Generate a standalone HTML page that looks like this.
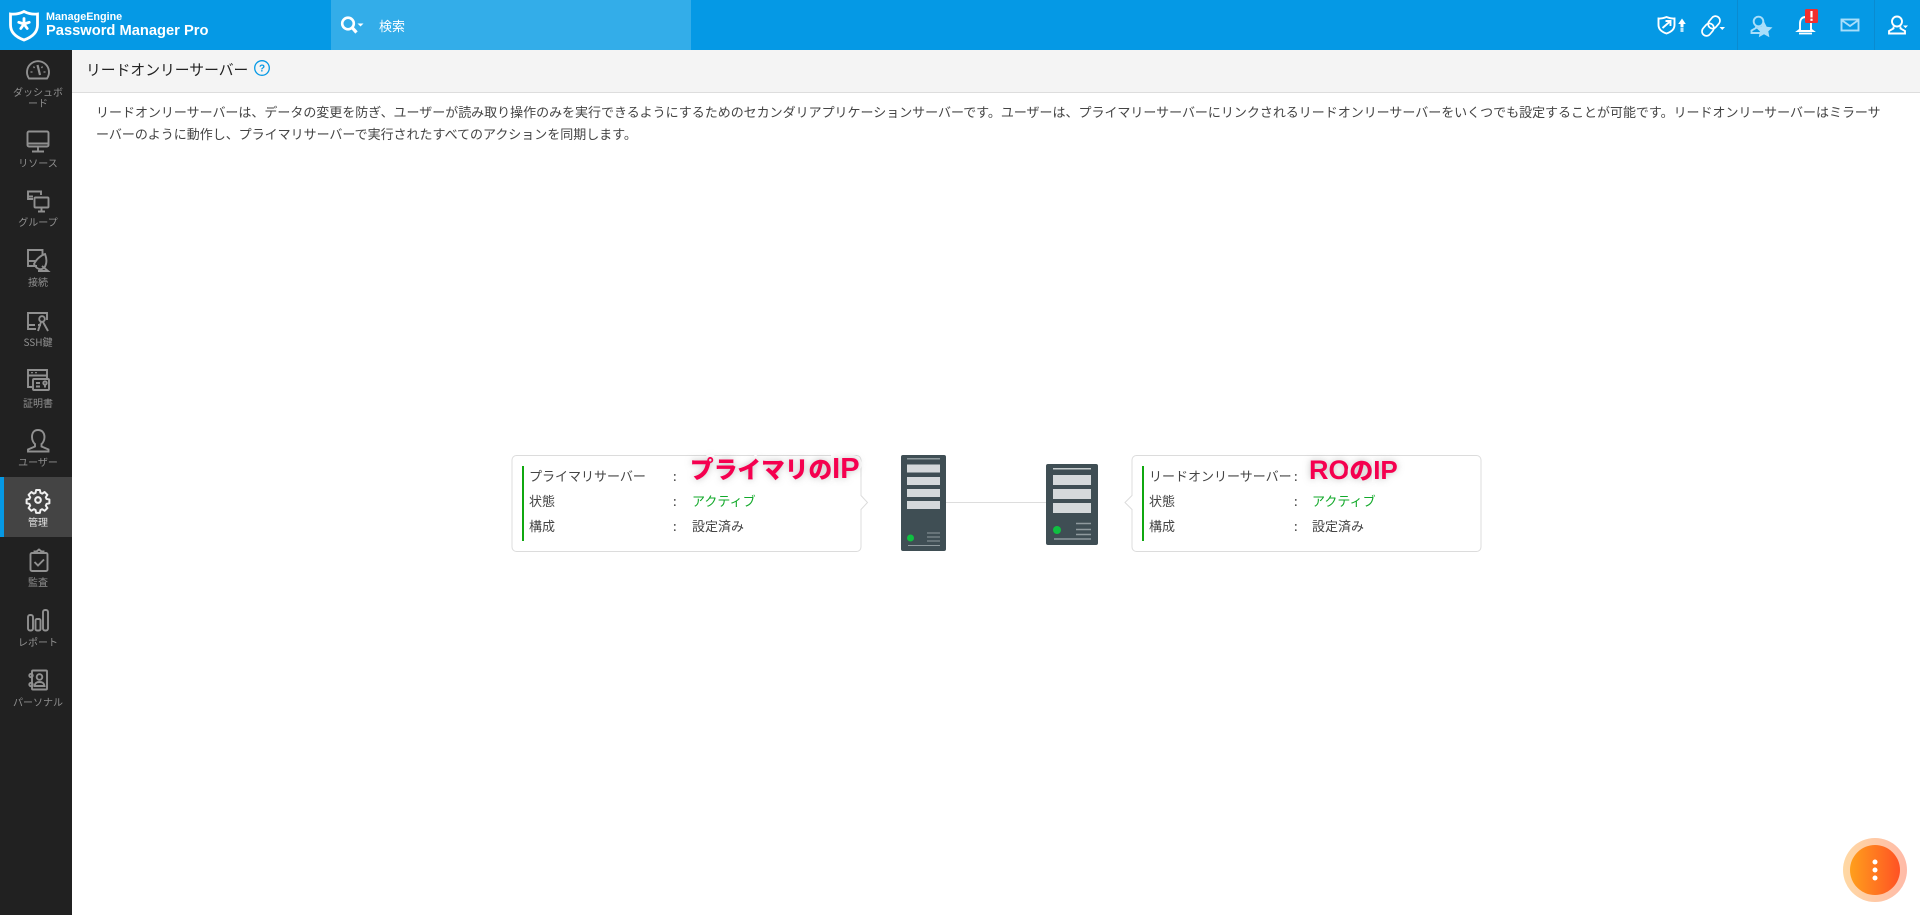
<!DOCTYPE html>
<html lang="ja">
<head>
<meta charset="utf-8">
<title>リードオンリーサーバー</title>
<style>
html,body{margin:0;padding:0;width:1920px;height:915px;overflow:hidden;background:#fff;font-family:"Liberation Sans","Noto Sans CJK JP",sans-serif;color:#333}
.a{position:absolute;white-space:nowrap}
.t{font-size:13px;line-height:20px;color:#444;font-family:"Noto Sans CJK JP","Liberation Sans",sans-serif}
.lab{position:absolute;left:4px;width:68px;text-align:center;font-size:10px;line-height:10px;color:#8f8f8f;font-family:"Noto Sans CJK JP","Liberation Sans",sans-serif}
.note{position:absolute;white-space:nowrap;font-size:23.700px;line-height:28px;font-weight:900;color:#f5004f;font-family:"Liberation Sans","Noto Sans CJK JP",sans-serif;-webkit-text-stroke:6px #fff;paint-order:stroke fill;text-shadow:0 0 7px rgba(120,120,120,.5)}
.note span{font-size:26px;font-weight:700}
svg{position:absolute;overflow:visible}
</style>
</head>
<body>
<!-- header -->
<div class="a" style="left:0;top:0;width:1920px;height:50px;background:#0599e5"></div>
<div class="a" style="left:331px;top:0;width:360px;height:50px;background:#33ade9"></div>
<div class="a" style="left:1737px;top:0;width:1px;height:50px;background:#0a8bd0"></div>
<div class="a" style="left:1874px;top:0;width:1px;height:50px;background:#0a8bd0"></div>
<svg style="left:9px;top:9px" width="32" height="33" viewBox="0 0 32 33"><path d="M15 2.500 C11 4.500 6 5.500 1.500 5 V16 C1.500 24 8 28.500 15 31 C22 28.500 28.500 24 28.500 16 V5 C24 5.500 19 4.500 15 2.500Z" fill="none" stroke="#fff" stroke-width="2.800"/><path d="M15 15 V9.500 M15 15 L20.200 13.300 M15 15 L18.200 19.500 M15 15 L11.800 19.500 M15 15 L9.800 13.300" stroke="#fff" stroke-width="2.800" fill="none" stroke-linecap="round"/></svg>
<div class="a" style="left:46px;top:10px;font-size:10.800px;line-height:14px;font-weight:700;color:#fff">ManageEngine</div>
<div class="a" style="left:46px;top:21px;font-size:14.700px;line-height:20px;font-weight:700;color:#fff">Password Manager Pro</div>
<svg style="left:338px;top:12px" width="30" height="26" viewBox="0 0 30 26" fill="none" stroke="#fff" stroke-width="2.600"><circle cx="10" cy="11.500" r="5.800"/><path d="M14.200 15.700 L18.500 20.500" stroke-width="3.200"/><path d="M19.500 11.500 h6 l-3 3z" fill="#fff" stroke="none"/></svg>
<div class="a" style="left:379px;top:16px;font-size:13px;line-height:20px;color:#fff;font-family:'Noto Sans CJK JP',sans-serif">検索</div>

<!-- header right icons -->
<svg style="left:1620px;top:0" width="300" height="50" viewBox="0 0 300 50" fill="none" stroke="#fff" stroke-width="1.900">
<path d="M46.500 17 C43 18.300 41 18.700 38.500 18.500 V25 C38.500 29.500 42 32 46.500 33.500 C51 32 54.500 29.500 54.500 25 V18.500 C52 18.700 50 18.300 46.500 17Z"/>
<path d="M42.500 28 L50 21.500 M45.500 21 H50.500 V26"/>
<path d="M58.200 24 L62 18.500 L65.800 24 H63.500 V27 H60.500 V24Z" fill="#fff" stroke="none"/><rect x="60.500" y="27.500" width="3" height="4.500" fill="#bfe6fa" stroke="none"/>
<g transform="rotate(-50 91 26)" stroke-width="1.700"><rect x="79.500" y="21.500" width="13.500" height="9" rx="4.500"/><rect x="89" y="21.500" width="13.500" height="9" rx="4.500"/></g>
<path d="M99.500 27 h5.500 l-2.750 3z" fill="#fff" stroke="none"/>
<g stroke="#a9defa"><circle cx="138.500" cy="21.500" r="4.800"/><path d="M136 26.500 V28 L131.500 30.500 V33 H141"/></g>
<path d="M144 21.500 l2.700 5.200 5.800.7 -4.200 4 1.100 5.800 -5.400-2.900 -5.200 2.900 1.100-5.800 -4.200-4 5.700-.7z" fill="#a9defa" stroke="none"/>
<path d="M180 29.500 V23.500 C180 19.500 182 17 185.500 17 C189 17 191 19.500 191 23.500 V29.500 L193 31 H178Z"/>
<path d="M179 33.500 h13" stroke-width="1.800"/>
<rect x="185" y="9" width="13" height="14" rx="1.500" fill="#f02e2e" stroke="none"/>
<rect x="190.400" y="11" width="2.200" height="6.500" fill="#fff" stroke="none"/><rect x="190.400" y="18.700" width="2.200" height="2.200" fill="#fff" stroke="none"/>
<g stroke="#a9defa"><rect x="221.500" y="19.500" width="17" height="11"/><path d="M221.500 20 L230 26 L238.500 20"/></g>
<circle cx="277" cy="21.500" r="5"/><path d="M273.500 26.500 V28.500 L269 31 V33.500 H285 V31 L280.500 28.500 V26.500"/>
<path d="M283 25.500 h5 l-2.500 2.600z" fill="#fff" stroke="none"/>
</svg>

<!-- sidebar -->
<div class="a" style="left:0;top:50px;width:72px;height:865px;background:#212121"></div>
<div class="a" style="left:0;top:477px;width:72px;height:60px;background:#444"></div>
<div class="a" style="left:0;top:477px;width:4px;height:60px;background:#0599e5"></div>

<svg style="left:0;top:50px" width="72" height="660" viewBox="0 50 72 660" fill="none" stroke="#909090" stroke-width="1.900">
<!-- dashboard -->
<path d="M29 78.500 A11 11 0 1 1 47 78.500 Z"/><path d="M37.500 65 L40 75" stroke-width="2.200"/><path d="M30.500 72 h2 M43.500 72 h2 M33.500 66.500 l1 1.500 M42.500 66.500 l-1 1.500" stroke-width="1.300"/>
<!-- resources -->
<rect x="27.500" y="131.500" width="21" height="15" rx="1.500"/><path d="M38 147 V151 M32 151.500 H44 M28 143.500 H48"/>
<!-- groups -->
<path d="M33 199 H28 V191.500 H41 V195"/><rect x="34.500" y="197.500" width="14" height="10" rx="1"/><path d="M41.500 208 V211 M38 211.500 H45 M28 196.500 H33"/>
<!-- connect -->
<path d="M37 266 H28 V250 H42.500 V256"/><path d="M28 261 H36"/><path d="M34 264 C37 258 42 255 45 254 C47 259 47 264 44 268 C41 270 37 270 34 264Z"/><path d="M42 266 L48 271 H38"/>
<!-- ssh -->
<path d="M36 329 H28 V313 H47 V320 M28 325 H35"/><circle cx="42" cy="319" r="2.800"/><path d="M41 322 L38 331 M43 322 L48 331 M38 325 h3"/>
<!-- cert -->
<path d="M32 387 H28 V370 H47 V378"/><path d="M28 375.500 H47"/><path d="M31 372.700 h2 M35 372.700 h2" stroke-width="1.200"/><rect x="33" y="379" width="16" height="11" rx="1"/><path d="M36 383 h4 M36 386.500 h4"/><circle cx="45" cy="383" r="1.700"/><path d="M45 385 V387.500"/>
<!-- user -->
<path d="M38 430 C33.500 430 32 433.500 32 437 C32 440 33.500 443 35 444 V446.500 L28 449.500 V451.500 H48.500 V449.500 L41.500 446.500 V444 C43 443 44.500 440 44.500 437 C44.500 433.500 42.500 430 38 430Z"/>
<!-- audit -->
<rect x="30.500" y="553" width="17" height="18" rx="1.500"/><path d="M34.500 553 V551.500 H36.500 L39 549.500 L41.500 551.500 H43.500 V553"/><path d="M34.500 562 L38 565.500 L44 559.500"/>
<!-- report -->
<rect x="28" y="615" width="5" height="15.500" rx="2"/><rect x="35.500" y="619" width="5" height="11.500" rx="1.500"/><rect x="43" y="610" width="5" height="20.500" rx="2"/>
<!-- personal -->
<rect x="32" y="670.500" width="15" height="19" rx="1"/><circle cx="39.500" cy="677" r="2.800"/><path d="M34.500 686 C35 682.500 37 682 39.500 682 C42 682 44 682.500 44.500 686Z"/><circle cx="31" cy="675.500" r="1.700"/><circle cx="31" cy="684.500" r="1.700"/>
</svg>
<svg style="left:26px;top:488px" width="24" height="24" viewBox="0 0 24 24" fill="none" stroke="#efefef" stroke-width="2.100" stroke-linejoin="round"><path d="M10 1.500 h4 l.6 3 1.800.8 2.600-1.700 2.900 2.900 -1.700 2.600 .8 1.800 3 .6 v4 l-3 .6 -.8 1.800 1.700 2.600 -2.900 2.900 -2.600-1.700 -1.800.8 -.6 3 h-4 l-.6-3 -1.800-.8 -2.600 1.700 -2.900-2.900 1.700-2.600 -.8-1.800 -3-.6 v-4 l3-.6 .8-1.800 -1.700-2.600 2.900-2.900 2.600 1.700 1.800-.8z" transform="translate(.6 .6) scale(.95)"/><circle cx="12" cy="12" r="2.800"/></svg>

<div class="lab" style="top:87px">ダッシュボ</div>
<div class="lab" style="top:98px">ード</div>
<div class="lab" style="top:158px">リソース</div>
<div class="lab" style="top:217px">グループ</div>
<div class="lab" style="top:277px">接続</div>
<div class="lab" style="top:337px">SSH鍵</div>
<div class="lab" style="top:398px">証明書</div>
<div class="lab" style="top:457px">ユーザー</div>
<div class="lab" style="top:517px;color:#e4e4e4">管理</div>
<div class="lab" style="top:577px">監査</div>
<div class="lab" style="top:637px">レポート</div>
<div class="lab" style="top:697px">パーソナル</div>

<!-- page header -->
<div class="a" style="left:72px;top:50px;width:1848px;height:42px;background:#f4f4f4;border-bottom:1px solid #ddd"></div>
<div class="a" style="left:86px;top:59px;font-size:14.800px;line-height:22px;color:#222;font-family:'Noto Sans CJK JP',sans-serif">リードオンリーサーバー</div>
<svg style="left:253px;top:59px" width="18" height="18" viewBox="0 0 18 18" fill="none"><circle cx="9" cy="9" r="7.300" stroke="#0599e5" stroke-width="1.300"/><text x="9" y="12.600" text-anchor="middle" font-size="10" font-weight="700" fill="#0599e5" font-family="Liberation Sans">?</text></svg>

<!-- description -->
<div class="a t" style="left:96px;top:101px;line-height:21.500px;letter-spacing:-.018px;color:#444">リードオンリーサーバーは、データの変更を防ぎ、ユーザーが読み取り操作のみを実行できるようにするためのセカンダリアプリケーションサーバーです。ユーザーは、プライマリーサーバーにリンクされるリードオンリーサーバーをいくつでも設定することが可能です。リードオンリーサーバーはミラーサ<br>ーバーのように動作し、プライマリサーバーで実行されたすべてのアクションを同期します。</div>

<!-- connector -->
<div class="a" style="left:946px;top:502px;width:100px;height:1px;background:#ddd"></div>

<!-- cards + servers -->
<svg style="left:0;top:0" width="1920" height="915" viewBox="0 0 1920 915" fill="none">
<path d="M516.500 455.500 H856.500 a4.500 4.500 0 0 1 4.500 4.500 V495.500 L867.500 502.500 L861 509.500 V547 a4.500 4.500 0 0 1 -4.500 4.500 H516.500 a4.500 4.500 0 0 1 -4.500 -4.500 V460 a4.500 4.500 0 0 1 4.500 -4.500Z" fill="#fff" stroke="#dcdcdc" stroke-width="1"/>
<path d="M1136.500 455.500 H1476.500 a4.500 4.500 0 0 1 4.500 4.500 V547 a4.500 4.500 0 0 1 -4.500 4.500 H1136.500 a4.500 4.500 0 0 1 -4.500 -4.500 V509.500 L1125 502.500 L1132 495.500 V460 a4.500 4.500 0 0 1 4.500 -4.500Z" fill="#fff" stroke="#dcdcdc" stroke-width="1"/>
<!-- server 1 -->
<rect x="901" y="455" width="45" height="96" rx="2" fill="#3f4e54"/>
<rect x="907" y="458" width="33" height="1.500" fill="#8f9a9e"/>
<rect x="907" y="464.500" width="33" height="8" fill="#d5d9db"/>
<rect x="907" y="477" width="33" height="8" fill="#d5d9db"/>
<rect x="907" y="489" width="33" height="8" fill="#d5d9db"/>
<rect x="907" y="501" width="33" height="8" fill="#d5d9db"/>
<circle cx="910.500" cy="538" r="3.500" fill="#0fc041"/>
<path d="M927 533 h13 M927 537 h13 M927 541 h13" stroke="#8f9a9e" stroke-width="1"/>
<path d="M908 545.500 h32" stroke="#8f9a9e" stroke-width="1"/>
<!-- server 2 -->
<rect x="1046" y="464" width="52" height="81" rx="2" fill="#3f4e54"/>
<rect x="1053" y="468" width="38" height="1.500" fill="#c5cbcd"/>
<rect x="1053" y="475" width="38" height="10" fill="#d5d9db"/>
<rect x="1053" y="489" width="38" height="10" fill="#d5d9db"/>
<rect x="1053" y="503" width="38" height="10" fill="#d5d9db"/>
<circle cx="1057" cy="530" r="4" fill="#0fc041"/>
<path d="M1076 523.500 h15 M1076 529.500 h15 M1076 534.500 h15" stroke="#8f9a9e" stroke-width="1.400"/>
<path d="M1054 539 h37" stroke="#8f9a9e" stroke-width="1.400"/>
</svg>

<div class="a" style="left:522px;top:466px;width:2px;height:75px;background:#10a810"></div>
<div class="a t" style="left:529px;top:466px">プライマリサーバー</div>
<div class="a t" style="left:529px;top:491px">状態</div>
<div class="a t" style="left:529px;top:516px">構成</div>
<div class="a t" style="left:673px;top:466px">:</div>
<div class="a t" style="left:673px;top:491px">:</div>
<div class="a t" style="left:673px;top:516px">:</div>
<div class="a t" style="left:692px;top:491px;color:#12a92a">アクティブ</div>
<div class="a t" style="left:692px;top:516px">設定済み</div>

<div class="a" style="left:1142px;top:466px;width:2px;height:75px;background:#10a810"></div>
<div class="a t" style="left:1149px;top:466px">リードオンリーサーバー</div>
<div class="a t" style="left:1149px;top:491px">状態</div>
<div class="a t" style="left:1149px;top:516px">構成</div>
<div class="a t" style="left:1294px;top:466px">:</div>
<div class="a t" style="left:1294px;top:491px">:</div>
<div class="a t" style="left:1294px;top:516px">:</div>
<div class="a t" style="left:1312px;top:491px;color:#12a92a">アクティブ</div>
<div class="a t" style="left:1312px;top:516px">設定済み</div>

<div class="note" style="left:690px;top:455px">プライマリの<span style="font-size:29px">IP</span></div>
<div class="note" style="left:1309px;top:456px"><span style="font-size:27px">RO</span>の<span>IP</span></div>

<!-- FAB -->
<svg style="left:1843px;top:838px" width="64" height="64" viewBox="0 0 64 64"><defs><linearGradient id="g" x1="0" x2="1" y1="0" y2="0"><stop offset="0" stop-color="#ff9f1c"/><stop offset="1" stop-color="#ff5224"/></linearGradient></defs><circle cx="32" cy="32" r="32" fill="url(#g)" opacity=".4"/><circle cx="32" cy="32" r="25" fill="url(#g)"/><circle cx="32" cy="24" r="2.500" fill="#fff"/><circle cx="32" cy="32" r="2.500" fill="#fff"/><circle cx="32" cy="40" r="2.500" fill="#fff"/></svg>
</body>
</html>
